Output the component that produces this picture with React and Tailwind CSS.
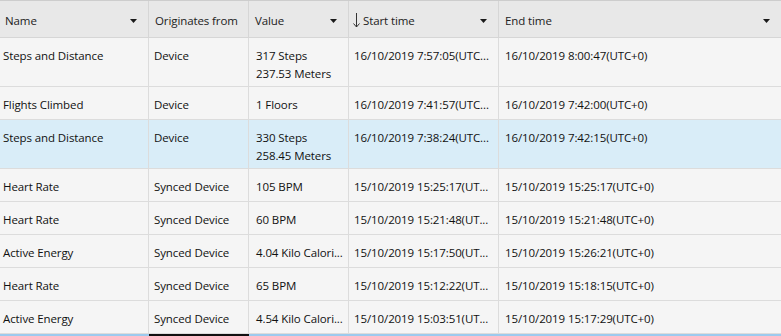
import React from "react";

const columns = [
  { key: "name", label: "Name", menu: true },
  { key: "origin", label: "Originates from", menu: false },
  { key: "value", label: "Value", menu: true },
  { key: "start", label: "Start time", menu: true, sorted: true },
  { key: "end", label: "End time", menu: true },
];

const rows = [
  {
    name: "Steps and Distance",
    origin: "Device",
    value: ["317 Steps", "237.53 Meters"],
    start: "16/10/2019 7:57:05(UTC...",
    end: "16/10/2019 8:00:47(UTC+0)",
  },
  {
    name: "Flights Climbed",
    origin: "Device",
    value: ["1 Floors"],
    start: "16/10/2019 7:41:57(UTC...",
    end: "16/10/2019 7:42:00(UTC+0)",
  },
  {
    name: "Steps and Distance",
    origin: "Device",
    value: ["330 Steps", "258.45 Meters"],
    start: "16/10/2019 7:38:24(UTC...",
    end: "16/10/2019 7:42:15(UTC+0)",
    selected: true,
  },
  {
    name: "Heart Rate",
    origin: "Synced Device",
    value: ["105 BPM"],
    start: "15/10/2019 15:25:17(UT...",
    end: "15/10/2019 15:25:17(UTC+0)",
  },
  {
    name: "Heart Rate",
    origin: "Synced Device",
    value: ["60 BPM"],
    start: "15/10/2019 15:21:48(UT...",
    end: "15/10/2019 15:21:48(UTC+0)",
  },
  {
    name: "Active Energy",
    origin: "Synced Device",
    value: ["4.04 Kilo Calori..."],
    start: "15/10/2019 15:17:50(UT...",
    end: "15/10/2019 15:26:21(UTC+0)",
  },
  {
    name: "Heart Rate",
    origin: "Synced Device",
    value: ["65 BPM"],
    start: "15/10/2019 15:12:22(UT...",
    end: "15/10/2019 15:18:15(UTC+0)",
  },
  {
    name: "Active Energy",
    origin: "Synced Device",
    value: ["4.54 Kilo Calori..."],
    start: "15/10/2019 15:03:51(UT...",
    end: "15/10/2019 15:17:29(UTC+0)",
  },
];

// left padding of each column's text, as in the grid
const cellPad = ["pl-[3px]", "pl-[5px]", "pl-[7px]", "pl-[5px]", "pl-[6px]"];
const headPad = ["pl-[5px]", "pl-[6px]", "pl-[6px]", "pl-[4px]", "pl-[6px]"];

function Caret() {
  return (
    <svg width="7" height="4" viewBox="0 0 7 4" className="shrink-0">
      <path d="M0 0h7L3.5 4z" fill="#1a1a1a" />
    </svg>
  );
}

function SortArrow() {
  return (
    <svg width="7" height="15" viewBox="0 0 7 15" className="shrink-0 mr-[3px]">
      <path d="M3.5 0v14M0.5 10.5l3 3.5 3-3.5" stroke="#333" strokeWidth="1" fill="none" />
    </svg>
  );
}

export default function App() {
  const grid = "grid grid-cols-[149px_100px_100px_150px_1fr]";

  return (
    <div
      className="w-[781px] h-[336px] overflow-hidden bg-[#f5f5f5] text-[11.5px] tracking-[-0.1px] text-[#111]"
      style={{ fontFamily: '"Segoe UI", "Open Sans", "Noto Sans", sans-serif' }}
    >
      {/* Header */}
      <div className={`${grid} h-[38px] bg-[#e8e8e8] border-t border-b border-t-[#cdcdcd] border-b-[#d6d6d6]`}>
        {columns.map((col, i) => (
          <div
            key={col.key}
            className={`flex items-center justify-between pt-[3px] pr-[11px] ${headPad[i]} ${
              i < columns.length - 1 ? "border-r border-[#d6d6d6]" : ""
            } text-[#222]`}
          >
            <div className="flex items-center">
              {col.sorted && <SortArrow />}
              <span className="whitespace-nowrap">{col.label}</span>
            </div>
            {col.menu && <Caret />}
          </div>
        ))}
      </div>

      {/* Rows */}
      {rows.map((row, r) => {
        const tall = row.value.length > 1;
        return (
          <div
            key={r}
            className={`${grid} ${tall ? "h-[49px]" : "h-[33px]"} border-b border-[#dcdcdc] ${
              row.selected ? "bg-[#d9edf8]" : ""
            }`}
          >
            {columns.map((col, i) => {
              const val = row[col.key];
              return (
                <div
                  key={col.key}
                  className={`pt-[9px] leading-[18px] overflow-hidden whitespace-nowrap ${cellPad[i]} ${
                    i < columns.length - 1 ? "border-r border-[#dcdcdc]" : ""
                  }`}
                >
                  {Array.isArray(val) ? val.map((v) => <div key={v}>{v}</div>) : val}
                </div>
              );
            })}
          </div>
        );
      })}

      {/* focus line of the next row */}
      <div className={`${grid} h-[2px] bg-[#9ccaee]`}>
        <div />
        <div className="bg-[#111]" />
      </div>
    </div>
  );
}
